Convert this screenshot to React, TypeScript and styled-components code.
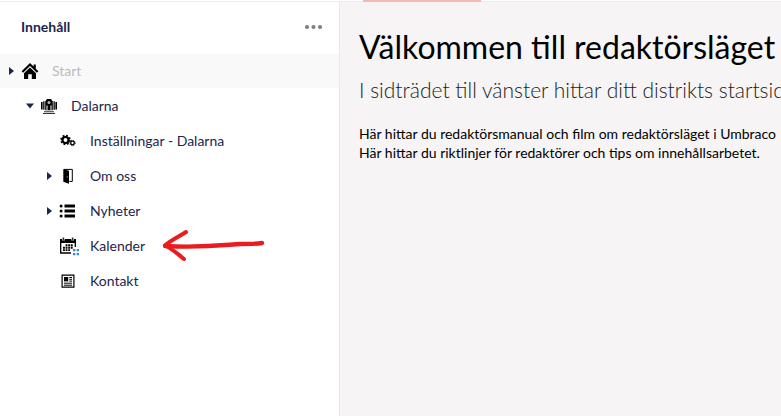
import React from "react";
import styled, { createGlobalStyle } from "styled-components";

const GlobalStyle = createGlobalStyle`
  *, *::before, *::after { box-sizing: border-box; }
  body {
    margin: 0;
    background: #ffffff;
    color: #1b264f;
    font-family: Lato, "Open Sans", sans-serif;
    font-size: 14px;
    overflow: hidden;
  }
`;

const Page = styled.div`
  display: flex;
  flex-direction: column;
  min-height: 100vh;
`;

const TopEdge = styled.div`
  display: flex;
  height: 2px;
  padding-left: 363px;
  border-bottom: 1px solid #ececef;
`;

const ActiveSection = styled.div`
  width: 118px;
  height: 2px;
  background: #f5b9b5;
`;

const Body = styled.div`
  display: flex;
  flex: 1;
`;

const Sidebar = styled.nav`
  flex: 0 0 340px;
  border-right: 1px solid #e9e9eb;
  background: #ffffff;
`;

const SidebarHeader = styled.header`
  display: flex;
  align-items: center;
  justify-content: space-between;
  height: 52px;
  padding: 0 15px 2px 21px;
`;

const SidebarTitle = styled.h2`
  margin: 0;
  font-size: 14px;
  line-height: 20px;
  font-weight: 700;
`;

const MoreButton = styled.button`
  display: flex;
  padding: 0;
  border: 0;
  background: none;
  color: #7f7f83;
  cursor: pointer;
`;

const Tree = styled.ul`
  margin: 0;
  padding: 0;
  list-style: none;
`;

const TreeRow = styled.li<{ $level: number; $shaded?: boolean }>`
  position: relative;
  display: flex;
  align-items: center;
  height: ${(p) => (p.$level === 0 ? 34 : 35)}px;
  padding-left: ${(p) => 4 + p.$level * 19}px;
  background: ${(p) => (p.$shaded ? "#f9f9f9" : "transparent")};
`;

const CaretSlot = styled.span`
  display: flex;
  flex: 0 0 14px;
  margin-right: 2px;
`;

const CaretButton = styled.button`
  display: flex;
  width: 14px;
  padding: 0;
  border: 0;
  background: none;
  color: #1b264f;
  cursor: pointer;
`;

const IconSlot = styled.span`
  display: flex;
  flex: 0 0 20px;
  margin-right: 12px;
  color: #000000;
`;

const TreeLink = styled.a<{ $muted?: boolean }>`
  color: ${(p) => (p.$muted ? "#bbbabf" : "#1b264f")};
  line-height: 20px;
  text-decoration: none;
  white-space: nowrap;
`;

const Pointer = styled.svg`
  position: absolute;
  left: 160px;
  top: 0;
  pointer-events: none;
`;

const Content = styled.main`
  flex: 1;
  min-width: 0;
  padding: 25px 0 0 19px;
  overflow: hidden;
  background: #f6f4f4;
  color: #000000;
  white-space: nowrap;
`;

const Title = styled.h1`
  margin: 0;
  font-size: 32px;
  line-height: 40px;
  font-weight: 400;
`;

const Lead = styled.p`
  margin: 8px 0 19px;
  color: #1c1c1c;
  font-size: 21px;
  line-height: 30px;
  font-weight: 300;
`;

const Text = styled.p`
  margin: 0;
  font-size: 14px;
  line-height: 19px;
`;

function Caret({ open, name }: { open: boolean; name: string }) {
  return (
    <CaretButton aria-label={name} aria-expanded={open}>
      <svg width="14" height="14" viewBox="0 0 14 14" fill="currentColor" aria-hidden="true">
        <path d={open ? "M3 4.5h8L7 9.5z" : "M5 3v8l5-4z"} />
      </svg>
    </CaretButton>
  );
}

const icons = {
  home: (
    <>
      <path d="M10 2 1.6 10.2l1.5 1.5L10 5.1l6.9 6.6 1.5-1.5-2.6-2.5V3.5h-2.2v2z" />
      <path d="M10 6.6 4 12.3V18h4.2v-4.8h3.6V18H16v-5.7z" />
    </>
  ),
  site: (
    <>
      <path d="M2 6h1.6v7.5H2zM16.4 6H18v7.5h-1.6zM4.2 5.2h1.3v8.6H4.2zM14.5 5.2h1.3v8.6h-1.3z" />
      <path d="M6.2 14.3V5.5L8 3h4l1.8 2.5v8.8z" />
      <path d="M8 14V9.5M12 14V9.5" stroke="#fff" />
      <circle cx="10" cy="6.6" r="1.5" fill="#b6b6b6" />
      <path d="M5 15.2h10v1H5zM4 17.1h12v1H4z" fill="#333" />
    </>
  ),
  gears: (
    <>
      <circle cx="7.5" cy="9" r="3" fill="none" stroke="currentColor" strokeWidth="2.2" />
      <circle cx="7.5" cy="9" r="4.4" fill="none" stroke="currentColor" strokeWidth="1.8" strokeDasharray="1.8 1.66" />
      <circle cx="14.5" cy="12" r="1.8" fill="none" stroke="currentColor" strokeWidth="1.3" />
      <circle cx="14.5" cy="12" r="2.7" fill="none" stroke="currentColor" strokeWidth="1" strokeDasharray="1.1 1.02" />
    </>
  ),
  door: (
    <>
      <path d="M5.3 3 11 4.8v13l-5.7-2z" />
      <path d="M6 3.4h8.3v12h-3" fill="none" stroke="currentColor" strokeWidth="1" />
      <path d="M9.3 10v1.6" stroke="#fff" strokeWidth="0.5" />
    </>
  ),
  list: (
    <>
      <circle cx="3.1" cy="5" r="1.5" />
      <circle cx="3.1" cy="10" r="1.5" />
      <circle cx="3.1" cy="15" r="1.5" />
      <path d="M6.5 3.6H17v2.8H6.5zM6.5 8.6H17v2.8H6.5zM6.5 13.6H17v2.8H6.5z" />
    </>
  ),
  calendar: (
    <>
      <path d="M2 3h16v4H2z" />
      <path d="M2.7 6v11H13M17.3 6v5" fill="none" stroke="currentColor" strokeWidth="1.3" />
      <path d="M5.4 1.6v3M14.6 1.6v3" stroke="#fff" strokeWidth="2.6" />
      <path d="M5.4 1.5v3M14.6 1.5v3" stroke="#243540" strokeWidth="1.6" />
      <path
        d="M7.6 9.2h7.2M5 11.7h9.8M5 14.1h7.2"
        stroke="currentColor"
        strokeWidth="1.9"
        strokeDasharray="1.9 0.7"
      />
      <path d="M15 13h2.4v2.2H15zM18.7 13H21v2.2h-2.3zM15 17h2.4v2.2H15zM18.7 17H21v2.2h-2.3z" fill="#3487f0" />
    </>
  ),
  article: (
    <>
      <path d="M4.1 4.1h11.8v12H4.1z" fill="none" stroke="currentColor" strokeWidth="1.2" />
      <path d="M6 6h4.2v4.4H6z" />
      <path d="M11.3 6.5H14M11.3 8.3H14M11.3 10.1H14M6 12.2h8M6 14.2h8" stroke="currentColor" strokeWidth="1" />
    </>
  ),
};

type Item = {
  label: string;
  level: number;
  icon: keyof typeof icons;
  open?: boolean;
  muted?: boolean;
  marked?: boolean;
};

const items: Item[] = [
  { label: "Start", level: 0, icon: "home", open: false, muted: true },
  { label: "Dalarna", level: 1, icon: "site", open: true },
  { label: "Inställningar - Dalarna", level: 2, icon: "gears" },
  { label: "Om oss", level: 2, icon: "door", open: false },
  { label: "Nyheter", level: 2, icon: "list", open: false },
  { label: "Kalender", level: 2, icon: "calendar", marked: true },
  { label: "Kontakt", level: 2, icon: "article" },
];

export default function App() {
  return (
    <Page>
      <GlobalStyle />
      <TopEdge>
        <ActiveSection />
      </TopEdge>
      <Body>
        <Sidebar aria-label="Innehåll">
          <SidebarHeader>
            <SidebarTitle>Innehåll</SidebarTitle>
            <MoreButton aria-label="Fler val">
              <svg width="20" height="6" viewBox="0 0 20 6" fill="currentColor" aria-hidden="true">
                <circle cx="3" cy="3" r="2.1" />
                <circle cx="9.5" cy="3" r="2.1" />
                <circle cx="16" cy="3" r="2.1" />
              </svg>
            </MoreButton>
          </SidebarHeader>
          <Tree>
            {items.map((item) => (
              <TreeRow key={item.label} $level={item.level} $shaded={item.muted}>
                <CaretSlot>
                  {item.open !== undefined && <Caret open={item.open} name={item.label} />}
                </CaretSlot>
                <IconSlot>
                  <svg width="20" height="20" viewBox="0 0 20 20" fill="currentColor" overflow="visible" aria-hidden="true">
                    {icons[item.icon]}
                  </svg>
                </IconSlot>
                <TreeLink href="#" $muted={item.muted}>
                  {item.label}
                </TreeLink>
                {item.marked && (
                  <Pointer
                    width="108"
                    height="35"
                    viewBox="0 0 108 35"
                    fill="none"
                    stroke="#e91d1f"
                    strokeWidth="4"
                    strokeLinecap="round"
                    strokeLinejoin="round"
                    overflow="visible"
                    aria-hidden="true"
                  >
                    <path d="M102 15c-6 1-12 1-22 1-16 1-38 4-75 2" strokeWidth="4.4" />
                    <path d="M26 4C20 8 11 12 5 17.5c7 3 12 8 19 13.500" />
                  </Pointer>
                )}
              </TreeRow>
            ))}
          </Tree>
        </Sidebar>
        <Content>
          <Title>Välkommen till redaktörsläget</Title>
          <Lead>I sidträdet till vänster hittar ditt distrikts startsida</Lead>
          <Text>Här hittar du redaktörsmanual och film om redaktörsläget i Umbraco</Text>
          <Text>Här hittar du riktlinjer för redaktörer och tips om innehållsarbetet.</Text>
        </Content>
      </Body>
    </Page>
  );
}
